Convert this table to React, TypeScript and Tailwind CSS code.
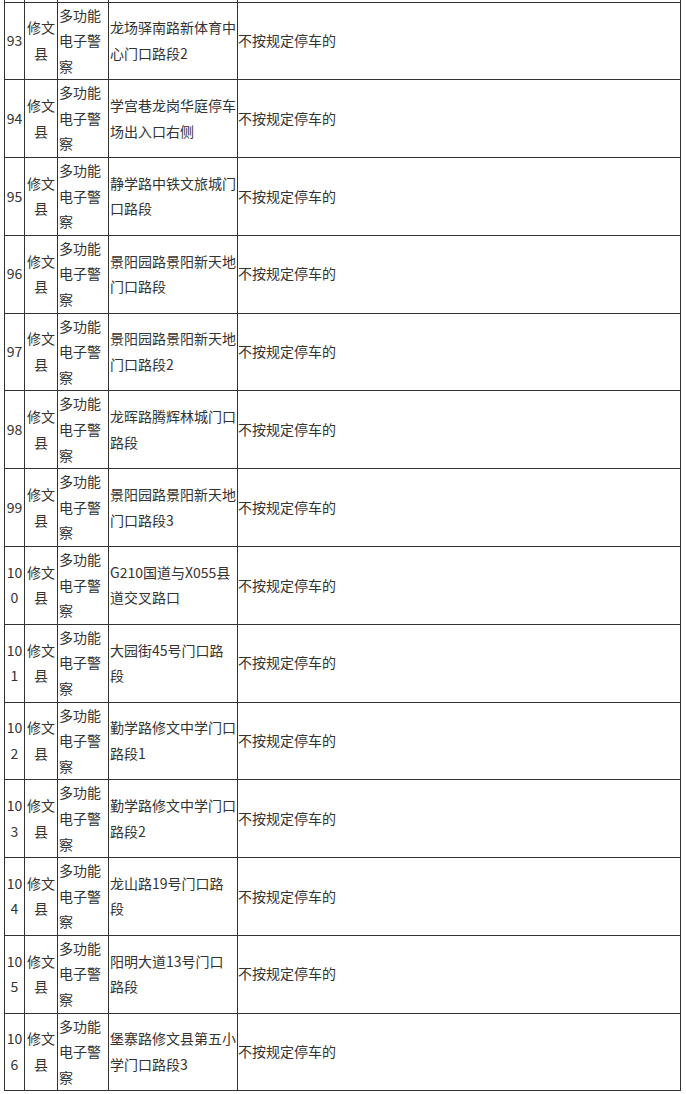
const rows: { no: string[]; place: string[] }[] = [
  { no: ["93"], place: ["龙场驿南路新体育中", "心门口路段2"] },
  { no: ["94"], place: ["学宫巷龙岗华庭停车", "场出入口右侧"] },
  { no: ["95"], place: ["静学路中铁文旅城门", "口路段"] },
  { no: ["96"], place: ["景阳园路景阳新天地", "门口路段"] },
  { no: ["97"], place: ["景阳园路景阳新天地", "门口路段2"] },
  { no: ["98"], place: ["龙晖路腾辉林城门口", "路段"] },
  { no: ["99"], place: ["景阳园路景阳新天地", "门口路段3"] },
  { no: ["10", "0"], place: ["G210国道与X055县", "道交叉路口"] },
  { no: ["10", "1"], place: ["大园街45号门口路", "段"] },
  { no: ["10", "2"], place: ["勤学路修文中学门口", "路段1"] },
  { no: ["10", "3"], place: ["勤学路修文中学门口", "路段2"] },
  { no: ["10", "4"], place: ["龙山路19号门口路", "段"] },
  { no: ["10", "5"], place: ["阳明大道13号门口", "路段"] },
  { no: ["10", "6"], place: ["堡寨路修文县第五小", "学门口路段3"] },
];

function Lines({ items }: { items: string[] }) {
  return (
    <>
      {items.map((t, i) => (
        <span key={i} className="block whitespace-nowrap">
          {t}
        </span>
      ))}
    </>
  );
}

export default function App() {
  return (
    <div
      className="min-h-[1094px] bg-white pl-[4px] text-[14px] leading-[25.6px] text-[#333]"
      style={{ fontFamily: '"Microsoft YaHei", "Noto Sans CJK SC", sans-serif' }}
    >
      <table className="w-[677px] table-fixed border-collapse">
        <colgroup>
          <col className="w-[20px]" />
          <col className="w-[33px]" />
          <col className="w-[51px]" />
          <col className="w-[129px]" />
          <col className="w-[443px]" />
        </colgroup>
        <tbody>
          {/* tail of the previous row, cut off by the screenshot */}
          <tr className="h-[2px]">
            <td className="border-x border-b border-[#333] p-0" />
            <td className="border-x border-b border-[#333] p-0" />
            <td className="border-x border-b border-[#333] p-0" />
            <td className="border-x border-b border-[#333] p-0" />
            <td className="border-x border-b border-[#333] p-0" />
          </tr>
          {rows.map((r) => (
            <tr key={r.no.join("")}>
              <td className="border border-[#333] p-0 text-center align-middle">
                <Lines items={r.no} />
              </td>
              <td className="border border-[#333] p-0 text-center align-middle">
                <Lines items={["修文", "县"]} />
              </td>
              <td className="border border-[#333] py-0 pl-[1px] pr-0 text-left align-middle">
                <Lines items={["多功能", "电子警", "察"]} />
              </td>
              <td className="border border-[#333] py-0 pl-[1px] pr-0 text-left align-middle">
                <Lines items={r.place} />
              </td>
              <td className="border border-[#333] p-0 text-left align-middle">
                不按规定停车的
              </td>
            </tr>
          ))}
        </tbody>
      </table>
    </div>
  );
}
